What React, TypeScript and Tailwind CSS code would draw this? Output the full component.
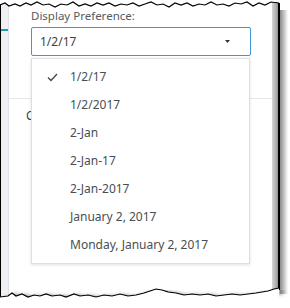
import { FC } from "react";

const options = [
  "1/2/17",
  "1/2/2017",
  "2-Jan",
  "2-Jan-17",
  "2-Jan-2017",
  "January 2, 2017",
  "Monday, January 2, 2017",
];

const font = { fontFamily: '"Segoe UI", "Noto Sans", "Open Sans", sans-serif' };

// torn paper edges (drawn, they sit over the page)
const topEdge =
  "M0 5 L5 3 L9 6 L15 4 L20 6 L26 3 L31 5 L37 2 L43 5 L49 4 L55 7 L61 4 L67 5 L73 2 L79 6 L85 4 L91 6 L97 3 L103 5 L109 3 L115 6 L121 4 L127 5 L133 3 L139 6 L145 4 L151 2 L157 5 L163 4 L169 7 L175 3 L181 5 L187 3 L193 6 L199 4 L205 5 L211 2 L217 5 L223 4 L229 6 L235 3 L241 4 L247 2 L253 6 L259 3 L265 5 L271 2 L279 3";
const bottomEdge =
  "M0 297 L8 296 L12 293 L16 296 L22 294 L28 297 L34 295 L40 296 L46 294 L52 296 L60 295 L66 297 L74 294 L80 296 L88 295 L96 297 L104 295 L112 296 L120 294 L128 296 L136 295 L144 293 L150 291 L156 289 L162 290 L168 292 L176 293 L184 295 L192 294 L200 295 L208 294 L216 296 L224 295 L232 294 L240 295 L248 294 L256 293 L262 292 L268 291 L274 289 L279 288";

const App: FC = () => {
  return (
    <div className="relative w-[290px] h-[308px] bg-white overflow-hidden" style={font}>
      {/* the window */}
      <div className="flex h-[300px] w-[279px] border-l border-black">
        {/* left sidebar strip */}
        <div className="w-[8px] bg-[#eef0f3] border-r border-[#dfe3e8] pt-[29px]">
          <div className="h-[2px] bg-[#1ba0b3]" />
        </div>

        {/* main panel */}
        <div className="relative flex-1 flex flex-col">
          <div className="pl-[22px] pr-[21px] pt-[7px]">
            <div className="text-[11.5px] leading-[18px] text-[#555b61]">Display Preference:</div>
            <div className="mt-[2px] h-[29px] border border-[#3d9ad4] rounded-[2px] flex items-center justify-between pl-[8px] pr-[20px]">
              <span className="text-[12px] text-[#3c3f42]">1/2/17</span>
              <svg width="5" height="3" viewBox="0 0 5 3">
                <path d="M0 0 H5 L2.5 3 Z" fill="#333" />
              </svg>
            </div>
          </div>
          <div className="mt-[42px] border-t border-[#e3e6ea]" />
          <div className="pl-[17px] pt-[8px] text-[12px] text-[#3c3f42]">C</div>

          {/* open dropdown menu */}
          <div className="absolute left-[22px] top-[58px] w-[219px] bg-white border border-[#dcdfe3] shadow-[0_1px_3px_rgba(0,0,0,0.12)] py-[4px]">
            {options.map((o, i) => (
              <div key={o} className="h-[28px] flex items-center text-[12px] text-[#4a4e52]">
                <span className="w-[38px] flex justify-end pr-[12px]">
                  {i === 0 && (
                    <svg width="11" height="9" viewBox="0 0 11 9">
                      <path d="M1 4.5 L4 7.5 L10 1" fill="none" stroke="#444" strokeWidth="1.3" />
                    </svg>
                  )}
                </span>
                {o}
              </div>
            ))}
          </div>
        </div>

        {/* right window frame */}
        <div className="w-[7px] bg-gradient-to-r from-[#d6d6d6] via-[#b4b4b4] to-[#8a8a8a]" />
      </div>

      {/* right black edge and its shadow */}
      <div className="absolute left-[278px] top-[3px] h-[287px] w-[2px] bg-black" />
      <div className="absolute left-[280px] top-[10px] h-[284px] w-[8px] bg-gradient-to-r from-[#8c8c8c] to-white" />

      <svg className="absolute left-0 top-0" width="290" height="308" viewBox="0 0 290 308">
        <defs>
          <filter id="blur" x="-10%" y="-10%" width="120%" height="130%">
            <feGaussianBlur stdDeviation="2" />
          </filter>
        </defs>
        <path d={topEdge + " L279 0 L0 0 Z"} fill="white" />
        <path d={topEdge} fill="none" stroke="black" strokeWidth="1.2" />
        <path d={bottomEdge} fill="none" stroke="#777" strokeWidth="4" transform="translate(4 3)" filter="url(#blur)" />
        <path d={bottomEdge + " L279 308 L0 308 Z"} fill="white" />
        <path d={bottomEdge} fill="none" stroke="black" strokeWidth="1.2" />
      </svg>
    </div>
  );
};

export default App;
